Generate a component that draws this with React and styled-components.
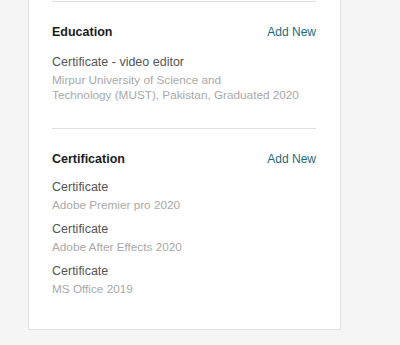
import React from "react";
import styled, { createGlobalStyle } from "styled-components";

const GlobalStyle = createGlobalStyle`
  html, body {
    margin: 0;
    padding: 0;
    background: #f5f5f5;
  }
  body {
    font-family: "Liberation Sans", Arial, sans-serif;
    -webkit-font-smoothing: antialiased;
  }
`;

const Page = styled.div`
  min-height: 345px;
  padding-left: 28px;
  background: #f5f5f5;
`;

const Card = styled.div`
  box-sizing: border-box;
  width: 313px;
  background: #ffffff;
  border: 1px solid #e3e3e3;
  border-top: none;
  padding: 1px 24px 33px 23px;
`;

const Section = styled.section`
  border-top: 1px solid #e0e0e0;
  padding: 20px 0 ${(p) => (p.$last ? "0" : "26px")};
`;

const Header = styled.div`
  display: flex;
  align-items: center;
  justify-content: space-between;
  margin-bottom: ${(p) => p.$gap}px;
`;

const Heading = styled.h3`
  margin: 0;
  font-size: 12.5px;
  line-height: 20px;
  font-weight: 700;
  color: #1c1c1c;
`;

const AddLink = styled.a`
  font-size: 12px;
  line-height: 20px;
  color: #1e6b7b;
  text-decoration: none;
  cursor: pointer;
`;

const List = styled.div`
  display: flex;
  flex-direction: column;
  gap: 8px;
`;

const Item = styled.div`
  display: flex;
  flex-direction: column;
`;

const ItemTitle = styled.div`
  font-size: 12.5px;
  line-height: 19px;
  color: #555555;
`;

const ItemSub = styled.div`
  font-size: 11.75px;
  line-height: 15px;
  color: #a9a9a9;
`;

const sections = [
  {
    title: "Education",
    gap: 11,
    items: [
      {
        title: "Certificate - video editor",
        sub: ["Mirpur University of Science and", "Technology (MUST), Pakistan, Graduated 2020"],
      },
    ],
  },
  {
    title: "Certification",
    gap: 9,
    items: [
      { title: "Certificate", sub: ["Adobe Premier pro 2020"] },
      { title: "Certificate", sub: ["Adobe After Effects 2020"] },
      { title: "Certificate", sub: ["MS Office 2019"] },
    ],
  },
];

export default function App() {
  return (
    <>
      <GlobalStyle />
      <Page>
        <Card>
          {sections.map((s, i) => (
            <Section key={s.title} $last={i === sections.length - 1}>
              <Header $gap={s.gap}>
                <Heading>{s.title}</Heading>
                <AddLink>Add New</AddLink>
              </Header>
              <List>
                {s.items.map((it, j) => (
                  <Item key={j}>
                    <ItemTitle>{it.title}</ItemTitle>
                    {it.sub.map((line, k) => (
                      <ItemSub key={k}>{line}</ItemSub>
                    ))}
                  </Item>
                ))}
              </List>
            </Section>
          ))}
        </Card>
      </Page>
    </>
  );
}
